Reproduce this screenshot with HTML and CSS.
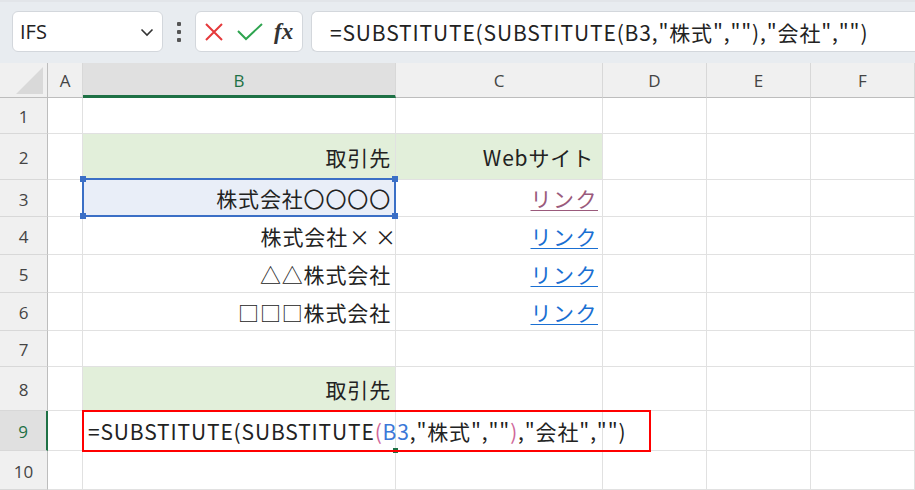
FILE: index.html
```html
<!DOCTYPE html>
<html lang="ja">
<head>
<meta charset="utf-8">
<link rel="stylesheet" href="styles.css">
</head>
<body>
<div class="toolbar">
  <div class="namebox"><span class="name">IFS</span>
    <svg class="chev" width="14" height="10" viewBox="0 0 14 10"><path d="M1.5 2.5 L7 8 L12.5 2.5" fill="none" stroke="#333" stroke-width="1.6"/></svg>
  </div>
  <div class="dots"><i></i><i></i><i></i></div>
  <div class="fxbox">
    <svg class="ico" width="20" height="20" viewBox="0 0 20 20"><path d="M2 2 L18 18 M18 2 L2 18" stroke="#e5393b" stroke-width="2" fill="none"/></svg>
    <svg class="ico" width="26" height="20" viewBox="0 0 26 20"><path d="M1 9 L9 17 L25 2" stroke="#2ea44f" stroke-width="2" fill="none"/></svg>
    <span class="fx">fx</span>
  </div>
  <div class="formulabar">=SUBSTITUTE(SUBSTITUTE(B3,"株式",""),"会社","")</div>
</div>
<div class="sheet">
  <div class="hd corner"><div class="tri"></div></div>
  <div class="hd col">A</div>
  <div class="hd col sel">B</div>
  <div class="hd col">C</div>
  <div class="hd col">D</div>
  <div class="hd col">E</div>
  <div class="hd col">F</div>

  <div class="rh">1</div><div class="c"></div><div class="c"></div><div class="c"></div><div class="c"></div><div class="c"></div><div class="c"></div>

  <div class="rh">2</div><div class="c"></div><div class="c g r">取引先</div><div class="c g r wide">Webサイト</div><div class="c"></div><div class="c"></div><div class="c"></div>

  <div class="rh">3</div><div class="c"></div><div class="c r ref">株式会社〇〇〇〇<div class="selbox"><i class="h tl"></i><i class="h tr"></i><i class="h bl"></i><i class="h br"></i></div></div><div class="c r"><span class="link visited">リンク</span></div><div class="c"></div><div class="c"></div><div class="c"></div>

  <div class="rh">4</div><div class="c"></div><div class="c r"><span>株式会社</span><span class="x">×</span><span class="x x2">×</span></div><div class="c r"><span class="link">リンク</span></div><div class="c"></div><div class="c"></div><div class="c"></div>

  <div class="rh">5</div><div class="c"></div><div class="c r">△△株式会社</div><div class="c r"><span class="link">リンク</span></div><div class="c"></div><div class="c"></div><div class="c"></div>

  <div class="rh">6</div><div class="c"></div><div class="c r">□□□株式会社</div><div class="c r"><span class="link">リンク</span></div><div class="c"></div><div class="c"></div><div class="c"></div>

  <div class="rh">7</div><div class="c"></div><div class="c"></div><div class="c"></div><div class="c"></div><div class="c"></div><div class="c"></div>

  <div class="rh">8</div><div class="c"></div><div class="c g r">取引先</div><div class="c"></div><div class="c"></div><div class="c"></div><div class="c"></div>

  <div class="rh act">9</div><div class="c"></div><div class="c edit"><span class="ftext">=SUBSTITUTE(SUBSTITUTE<span class="pk">(</span><span class="bl">B3</span>,"株式",""<span class="pk">)</span>,"会社","")</span><span class="caret"></span><div class="redbox"></div><i class="fill"></i></div><div class="c"></div><div class="c"></div><div class="c"></div><div class="c"></div>

  <div class="rh">10</div><div class="c"></div><div class="c"></div><div class="c"></div><div class="c"></div><div class="c"></div><div class="c"></div>
</div>
</body>
</html>
```
FILE: styles.css
```css
* { box-sizing: border-box; }
html, body { margin: 0; padding: 0; background: #fff; }
body { width: 915px; height: 490px; overflow: hidden; font-family: "Noto Sans CJK JP", "Noto Sans", sans-serif; }

.toolbar {
  height: 63px;
  background: #e8ecf0;
  border-top: 2px solid #e2e5e9;
  display: flex;
  align-items: flex-start;
  padding: 9px 0 0 12px;
}
.namebox {
  width: 151px; height: 41px;
  background: #fff;
  border: 1px solid #d3d7dc;
  border-radius: 6px;
  display: flex; align-items: center; justify-content: space-between;
  padding: 0 8px 0 7px;
}
.name { font-family: "Open Sans", "Noto Sans", sans-serif; font-size: 20px; color: #222; }
.dots { width: 32px; height: 41px; display: flex; flex-direction: column; align-items: center; justify-content: center; gap: 4px; }
.dots i { width: 4px; height: 4px; background: #555; border-radius: 1px; display: block; }
.fxbox {
  width: 108px; height: 41px;
  background: #fff;
  border: 1px solid #d3d7dc;
  border-radius: 6px;
  display: flex; align-items: center;
  padding: 0 0 0 8px; gap: 13px;
}
.fx { font-family: "Liberation Serif", serif; font-style: italic; font-weight: bold; font-size: 23px; color: #333; margin-left: -2px; }
.formulabar {
  margin-left: 8px;
  flex: 1; height: 41px;
  background: #fff;
  border: 1px solid #d3d7dc; border-right: none;
  border-radius: 6px 0 0 6px;
  display: flex; align-items: center;
  padding-left: 18px;
  font-size: 21px; letter-spacing: 0.85px; color: #222; white-space: nowrap;
}

.sheet {
  display: grid;
  grid-template-columns: 48px 35px 313px 207px 104px 104px 104px;
  grid-template-rows: 35px 36px 46px 37px 38px 38px 38px 36px 44px 40px 39px;
  font-size: 21px; letter-spacing: 0.85px; color: #222;
}
.hd {
  background: #f0f0f0;
  border-right: 1px solid #d8d8d8;
  border-bottom: 1px solid #bdbdbd;
  display: flex; align-items: center; justify-content: center;
  font-family: "Open Sans", "Noto Sans", sans-serif; font-size: 17px; letter-spacing: 0; color: #444;
}
.corner { position: relative; border-right: 1px solid #bdbdbd; }
.tri { position: absolute; left: 16px; top: 4px; width: 27px; height: 27px; background: #d9d9d9; clip-path: polygon(100% 0, 100% 100%, 0 100%); }
.hd.sel { background: #e0e0e0; border-bottom: 3px solid #1e7145; color: #1e7145; padding-top: 2px; }
.rh {
  background: #f0f0f0;
  border-right: 1px solid #bdbdbd;
  border-bottom: 1px solid #d8d8d8;
  display: flex; align-items: center; justify-content: center;
  padding-top: 2px;
  font-family: "Open Sans", "Noto Sans", sans-serif; font-size: 17px; letter-spacing: 0; color: #444;
}
.rh.act { background: #e0e0e0; border-right: 2px solid #1e7145; color: #1e7145; }
.c {
  border-right: 1px solid #e1e1e1;
  border-bottom: 1px solid #e1e1e1;
  display: flex; align-items: center;
  white-space: nowrap;
  padding: 0 4px 0 5px;
}
.c.r { justify-content: flex-end; }
.c.wide { padding-right: 8px; }
.c.g { background: #e2efda; }
.c.ref { background: #e9eef8; position: relative; }
.x { display: inline-block; width: 13px; overflow: visible; text-align: center; letter-spacing: 0; margin-left: 1px; }
.x2 { margin-left: 13px; margin-right: 3px; }
.selbox { position: absolute; left: -1px; top: -2px; right: -1px; bottom: -1px; border: 2px solid #3b6fc6; }
.h { position: absolute; width: 6px; height: 6px; background: #3b6fc6; display: block; }
.h.tl { left: -4px; top: -4px; } .h.tr { right: -4px; top: -4px; }
.h.bl { left: -4px; bottom: -4px; } .h.br { right: -4px; bottom: -4px; }
.link { color: #1a6fd2; text-decoration: underline; text-underline-offset: 3px; text-decoration-thickness: 1px; letter-spacing: 1.5px; }
.link.visited { color: #9a5a7c; }
.c.edit { position: relative; overflow: visible; z-index: 2; }
.ftext { position: relative; }
.pk { color: #d0679a; }
.bl { color: #3b78d8; }
.caret { display: inline-block; width: 1px; height: 32px; background: #000; margin-left: 2px; }
.redbox { position: absolute; left: -1px; top: -1px; width: 569px; height: 42px; border: 2px solid #ff0000; }
.fill { position: absolute; right: -3px; bottom: -3px; width: 5px; height: 5px; background: #1e7145; display: block; z-index: -1; }
```
